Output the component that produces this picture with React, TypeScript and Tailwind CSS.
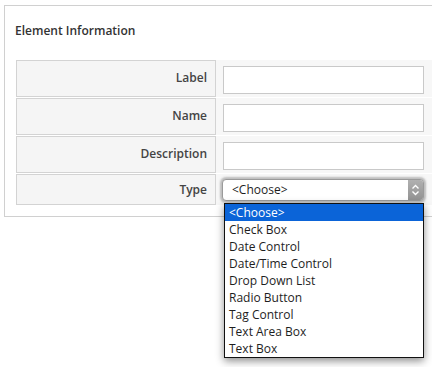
import { useState } from "react";

const options = [
  "<Choose>",
  "Check Box",
  "Date Control",
  "Date/Time Control",
  "Drop Down List",
  "Radio Button",
  "Tag Control",
  "Text Area Box",
  "Text Box",
];

function TextRow({ label }: { label: string }) {
  return (
    <div className="flex h-[37px]">
      <div className="w-[200px] shrink-0 border border-[#d3d3d3] bg-[#f5f5f5] flex items-center justify-end pr-[8px] pb-[2px] text-[12px] font-semibold text-[#444]">
        {label}
      </div>
      <div className="flex-1 bg-[#f7f7f7] pl-[7px] pt-[6px]">
        <input
          type="text"
          className="block w-[201px] h-[28px] border border-[#c9c9c9] bg-white outline-none"
        />
      </div>
    </div>
  );
}

function TypeRow() {
  const [selected] = useState(0);
  return (
    <div className="flex h-[31px]">
      <div className="w-[200px] shrink-0 border border-[#d3d3d3] bg-[#f5f5f5] flex items-center justify-end pr-[8px] text-[12px] font-semibold text-[#444]">
        Type
      </div>
      <div className="flex-1 bg-[#f7f7f7] pl-[6px] pt-[5px]">
        <div className="relative w-[202px]">
          <div className="flex h-[22px] rounded-[4px] border border-[#9a9a9a] bg-white shadow-[0_0_2px_2px_rgba(140,140,140,0.55)] overflow-hidden">
            <div className="flex-1 pl-[9px] text-[12px] leading-[20px] text-[#1e1e1e]">
              {options[selected]}
            </div>
            <div className="w-[15px] bg-gradient-to-b from-[#b0b0b0] to-[#939393] flex items-center justify-center">
              <svg width="9" height="14" viewBox="0 0 9 14" fill="none">
                <path d="M1.5 5.5 L4.5 2.5 L7.5 5.5" stroke="white" strokeWidth="1.4" />
                <path d="M1.5 8.5 L4.5 11.5 L7.5 8.5" stroke="white" strokeWidth="1.4" />
              </svg>
            </div>
          </div>
          <div className="absolute left-[2px] top-[24px] w-[200px] border border-[#111] bg-white shadow-[0_3px_8px_rgba(0,0,0,0.45)] z-10">
            {options.map((o, i) => (
              <div
                key={o}
                className={
                  i === selected
                    ? "h-[17px] pl-[4px] text-[12px] leading-[17px] bg-[#0b64d8] text-white"
                    : "h-[17px] pl-[4px] text-[12px] leading-[17px] text-[#1e1e1e]"
                }
              >
                {o}
              </div>
            ))}
          </div>
        </div>
      </div>
    </div>
  );
}

export default function App() {
  return (
    <div
      className="w-[432px] h-[367px] overflow-hidden bg-white pt-[5px] pl-[4px]"
      style={{ fontFamily: '"Open Sans", "Liberation Sans", sans-serif' }}
    >
      <div className="w-[440px] border border-[#d0d0d0] pl-[11px] pt-[17px] pb-[11px]">
        <div className="-ml-[1px] text-[12px] leading-[16px] font-semibold text-[#333]">
          Element Information
        </div>
        <div className="mt-[21px] flex flex-col gap-[1px]">
          <TextRow label="Label" />
          <TextRow label="Name" />
          <TextRow label="Description" />
          <TypeRow />
        </div>
      </div>
    </div>
  );
}
